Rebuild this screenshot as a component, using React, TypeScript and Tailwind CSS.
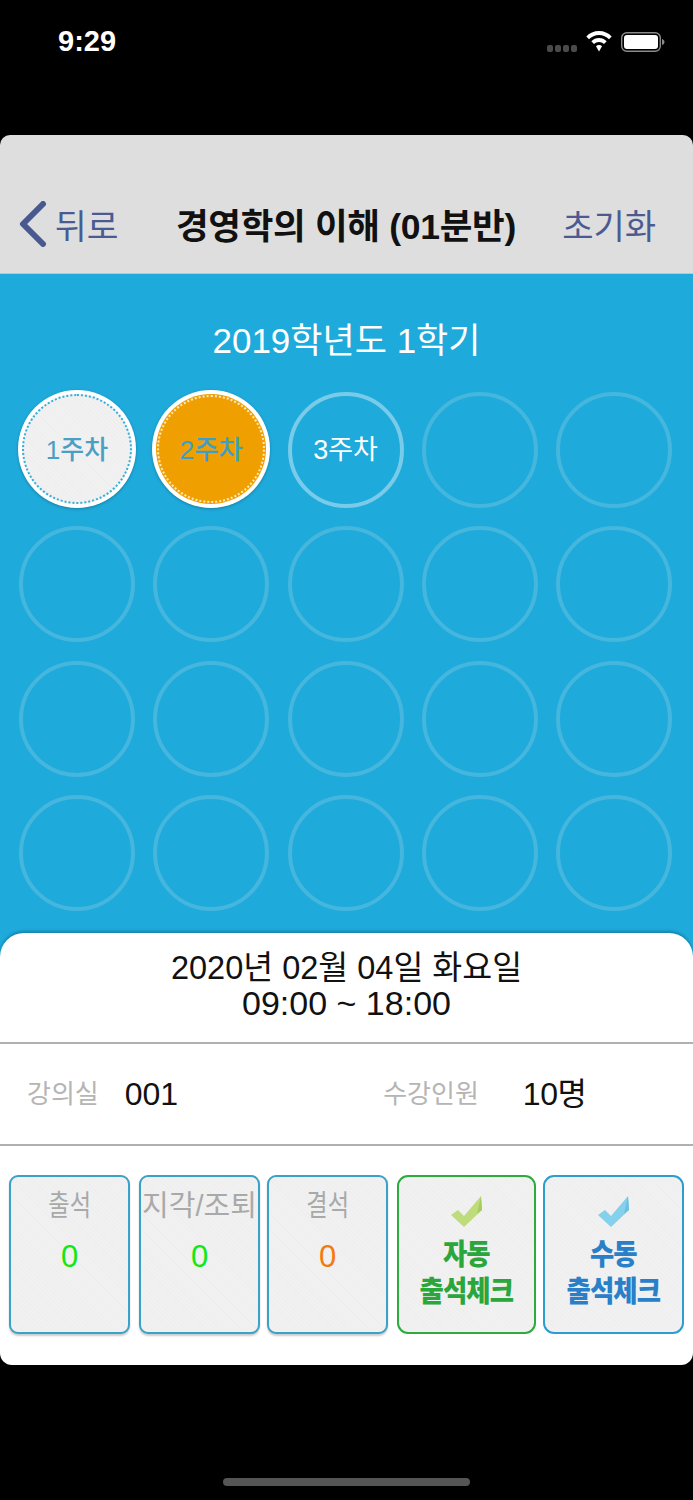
const FONT = "font-['Liberation_Sans','Noto_Sans_CJK_KR',sans-serif]";

const texture =
  "bg-[#efefef] bg-[repeating-linear-gradient(45deg,#eeeeee_0px,#eeeeee_1px,#f1f1f1_1px,#f1f1f1_3px)]";

function StatusBar() {
  return (
    <div className="h-[135px] bg-black relative shrink-0">
      <div className="absolute left-[58px] top-[25px] text-white text-[29px] leading-[32px] font-semibold">9:29</div>
      <div className="absolute left-[547px] top-[45px] flex gap-[2px]">
        {[0, 1, 2, 3].map((i) => (
          <div key={i} className="w-[6px] h-[7px] rounded-[2px] bg-[#4a4a4a]" />
        ))}
      </div>
      <svg className="absolute left-[586px] top-[31px]" width="26" height="21" viewBox="0 0 26 21">
        <path d="M13 0C8 0 3.600 2 0.300 5.400L3 8.200C5.600 5.500 9.100 3.900 13 3.900C16.900 3.900 20.400 5.500 23 8.200L25.700 5.400C22.400 2 18 0 13 0Z" fill="#fff" />
        <path d="M13 7C10 7 7.300 8.200 5.300 10.300L8 13C9.300 11.700 11.100 10.900 13 10.900C14.900 10.900 16.700 11.700 18 13L20.700 10.300C18.700 8.200 16 7 13 7Z" fill="#fff" />
        <path d="M13 14C11.800 14 10.800 14.500 10 15.200L13 20.500L16 15.200C15.200 14.500 14.200 14 13 14Z" fill="#fff" />
      </svg>
      <svg className="absolute left-[621px] top-[32px]" width="44" height="20" viewBox="0 0 44 20">
        <rect x="0.700" y="0.700" width="38.600" height="18.600" rx="5" fill="none" stroke="#8a8a8a" strokeWidth="1.400" />
        <rect x="3" y="3" width="34" height="14" rx="3" fill="#fff" />
        <path d="M41 7C42.500 7.500 43.500 8.500 43.500 10C43.500 11.500 42.500 12.500 41 13Z" fill="#8a8a8a" />
      </svg>
    </div>
  );
}

function NavBar() {
  return (
    <div className="h-[139px] bg-[#dedede] rounded-t-[10px] border-b border-[#c4c4c4] flex items-end pb-[23px] pl-[19px] pr-[37px] shrink-0 relative">
      <div className="flex items-center w-[157px] h-[46px]">
        <svg width="28" height="46" viewBox="0 0 28 46" fill="none" className="-mt-[6px]">
          <path d="M24 3L4 23L24 43" stroke="#47598f" strokeWidth="6" strokeLinecap="round" strokeLinejoin="round" />
        </svg>
        <span className="ml-[8px] text-[34.500px] leading-[46px] text-[#4b5b92]">뒤로</span>
      </div>
      <div className="w-[386px] h-[46px] text-[35.500px] leading-[46px] font-semibold text-[#111] whitespace-nowrap tracking-[-0.3px]">
        경영학의 이해 (01분반)
      </div>
      <div className="h-[46px] text-[34px] leading-[46px] text-[#4b5b92] whitespace-nowrap ml-auto">초기화</div>
    </div>
  );
}

function Week({ n }: { n: number }) {
  if (n === 1) {
    return (
      <div className="-mx-px -mt-[2px] w-[118px] h-[118px] rounded-full bg-white p-[4px] shadow-[0_1px_3px_rgba(0,0,0,0.25)]">
        <div className={`w-full h-full rounded-full border-2 border-dotted border-[#2fb0dd] flex items-center justify-center ${texture}`}>
          <span className="mt-[3px] text-[26px] font-medium text-[#4a9fc4]">1주차</span>
        </div>
      </div>
    );
  }
  if (n === 2) {
    return (
      <div className="-mx-px -mt-[2px] w-[118px] h-[118px] rounded-full bg-white p-[4px] shadow-[0_1px_3px_rgba(0,0,0,0.25)]">
        <div className="w-full h-full rounded-full bg-[#f09f00] flex items-center justify-center p-px">
          <div className="w-full h-full rounded-full border-2 border-dotted border-[#ffe9bd] flex items-center justify-center">
            <span className="mt-[3px] text-[26.500px] font-medium text-[#3d9fc9]">2주차</span>
          </div>
        </div>
      </div>
    );
  }
  return (
    <div className={`w-[116px] h-[116px] rounded-full border-[4px] flex items-center justify-center ${n === 3 ? "border-[#79cbea]" : "border-[#45b6de]"}`}>
      {n === 3 && <span className="mt-[1px] text-[27px] text-white">3주차</span>}
    </div>
  );
}

function WeekSection() {
  const weeks = Array.from({ length: 20 }, (_, i) => i + 1);
  return (
    <div className="bg-[#1eaadb] h-[690px] shrink-0">
      <div className="h-[118px] pt-[44px] text-center text-[35px] leading-[46px] text-white">2019학년도 1학기</div>
      <div className="grid grid-cols-[repeat(5,116px)] gap-x-[18.25px] gap-y-[18.25px] pl-[19px]">
        {weeks.map((n) => (
          <Week key={n} n={n} />
        ))}
      </div>
    </div>
  );
}

function CountCard({ label, value, color, labelClass, className }: { label: string; value: number; color: string; labelClass: string; className: string }) {
  return (
    <div className={`w-[121px] h-[159px] rounded-[9px] border-2 border-[#38a2c9] shadow-[0_2px_2px_rgba(0,0,0,0.2)] flex flex-col items-center overflow-hidden ${texture} ${className}`}>
      <div className={`mt-[11px] h-[36px] text-[29px] leading-[36px] text-[#a9a9a9] whitespace-nowrap ${labelClass}`}>{label}</div>
      <div className={`mt-[15px] text-[31px] leading-[36px] ${color}`}>{value}</div>
    </div>
  );
}

function Check({ light, dark }: { light: string; dark: string }) {
  return (
    <svg width="32" height="32" viewBox="0 0 32 32">
      <path d="M0 19L7 14L13 20L30 0L31 14L13 31Z" fill={light} />
      <path d="M30 0L31 14L26 18Z" fill={dark} />
    </svg>
  );
}

function CheckCard({ top, width, border, text, light, dark, className }: { top: string; width: string; border: string; text: string; light: string; dark: string; className: string }) {
  return (
    <div className={`${width} h-[159px] rounded-[11px] border-2 ${border} flex flex-col items-center pt-[19px] ${texture} ${className}`}>
      <Check light={light} dark={dark} />
      <div className={`mt-[9px] text-[29px] leading-[37px] font-black tracking-[-1px] text-center whitespace-nowrap scale-x-[0.91] ${text}`}>
        {top}
        <br />
        출석체크
      </div>
    </div>
  );
}

function InfoPanel() {
  return (
    <div className="relative -mt-[31px] bg-white rounded-t-[24px] rounded-b-[12px] h-[432px] shadow-[0_-2px_3px_rgba(0,60,90,0.35)] shrink-0 overflow-hidden">
      <div className="h-[111px] border-b-2 border-[#b0b0b0] pt-[18px] text-center text-[#111]">
        <div className="text-[32.500px] leading-[35px]">2020년 02월 04일 화요일</div>
        <div className="text-[34px] leading-[35px]">09:00 ~ 18:00</div>
      </div>
      <div className="h-[102px] border-b-2 border-[#b0b0b0] flex items-center">
        <span className="ml-[27px] text-[26px] text-[#b5b5b5]">강의실</span>
        <span className="ml-[26px] text-[32px] text-[#111]">001</span>
        <span className="ml-[205px] text-[26px] text-[#b5b5b5]">수강인원</span>
        <span className="ml-[44px] text-[32px] text-[#111] tracking-[-0.5px]">10명</span>
      </div>
      <div className="flex pl-[9px] pt-[29px]">
        <CountCard label="출석" labelClass="scale-x-[0.8]" value={0} color="text-[#12e812]" className="" />
        <CountCard label="지각/조퇴" labelClass="" value={0} color="text-[#12e812]" className="ml-[9px]" />
        <CountCard label="결석" labelClass="scale-x-[0.8]" value={0} color="text-[#f47a10]" className="ml-[7px]" />
        <CheckCard top="자동" width="w-[139px]" border="border-[#2eab3c]" text="text-[#2aa63c]" light="#bfdc7c" dark="#a5cc5c" className="ml-[9px]" />
        <CheckCard top="수동" width="w-[141px]" border="border-[#2d9dd0]" text="text-[#2a80c8]" light="#85d0ea" dark="#6cc0e2" className="ml-[7px]" />
      </div>
    </div>
  );
}

export default function App() {
  return (
    <div className={`w-[693px] h-[1500px] bg-black overflow-hidden flex flex-col ${FONT}`}>
      <StatusBar />
      <NavBar />
      <WeekSection />
      <InfoPanel />
      <div className="flex justify-center mt-[113px]">
        <div className="w-[247px] h-[8px] rounded-full bg-[#555]" />
      </div>
    </div>
  );
}
